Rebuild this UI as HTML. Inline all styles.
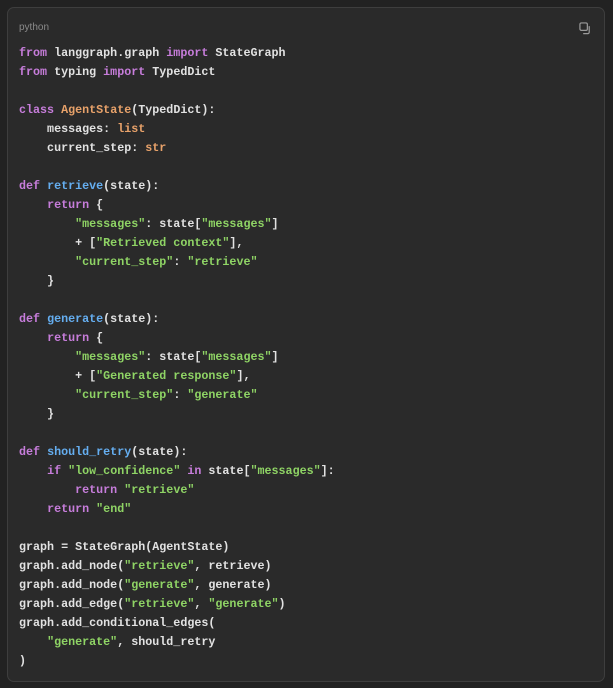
<!DOCTYPE html>
<html><head><style>
html,body{margin:0;padding:0;background:#222222;width:613px;height:688px;overflow:hidden}
.card{position:absolute;left:7px;top:7px;width:598px;height:675px;background:#2a2a2a;border:1px solid #3e3e3e;border-radius:7px;box-sizing:border-box}
.lbl{position:absolute;left:11px;top:14px;font:10px "Liberation Sans",sans-serif;color:#8a8a8a}
.copy{position:absolute;left:579px;top:22px}
pre{position:absolute;left:19px;top:44px;margin:0;font:bold 11.7px/19px "Liberation Mono",monospace;color:#e2e2e2}
.k{color:#c77ddb}.c{color:#e8a26a}.f{color:#65aef0}.s{color:#8fd465}
</style></head><body>
<div class="card"><div class="lbl">python</div></div>
<svg class="copy" width="13" height="13" viewBox="0 0 14 14" fill="none" stroke="#9a9a9a" stroke-width="1.3"><rect x="1" y="1" width="8" height="8" rx="1.5"/><path d="M11 4.5V11a1.5 1.5 0 0 1-1.5 1.5H4.5"/></svg>
<pre><span class="k">from</span> langgraph.graph <span class="k">import</span> StateGraph
<span class="k">from</span> typing <span class="k">import</span> TypedDict

<span class="k">class</span> <span class="c">AgentState</span>(TypedDict):
    messages: <span class="c">list</span>
    current_step: <span class="c">str</span>

<span class="k">def</span> <span class="f">retrieve</span>(state):
    <span class="k">return</span> {
        <span class="s">"messages"</span>: state[<span class="s">"messages"</span>]
        + [<span class="s">"Retrieved context"</span>],
        <span class="s">"current_step"</span>: <span class="s">"retrieve"</span>
    }

<span class="k">def</span> <span class="f">generate</span>(state):
    <span class="k">return</span> {
        <span class="s">"messages"</span>: state[<span class="s">"messages"</span>]
        + [<span class="s">"Generated response"</span>],
        <span class="s">"current_step"</span>: <span class="s">"generate"</span>
    }

<span class="k">def</span> <span class="f">should_retry</span>(state):
    <span class="k">if</span> <span class="s">"low_confidence"</span> <span class="k">in</span> state[<span class="s">"messages"</span>]:
        <span class="k">return</span> <span class="s">"retrieve"</span>
    <span class="k">return</span> <span class="s">"end"</span>

graph = StateGraph(AgentState)
graph.add_node(<span class="s">"retrieve"</span>, retrieve)
graph.add_node(<span class="s">"generate"</span>, generate)
graph.add_edge(<span class="s">"retrieve"</span>, <span class="s">"generate"</span>)
graph.add_conditional_edges(
    <span class="s">"generate"</span>, should_retry
)</pre>
</body></html>
